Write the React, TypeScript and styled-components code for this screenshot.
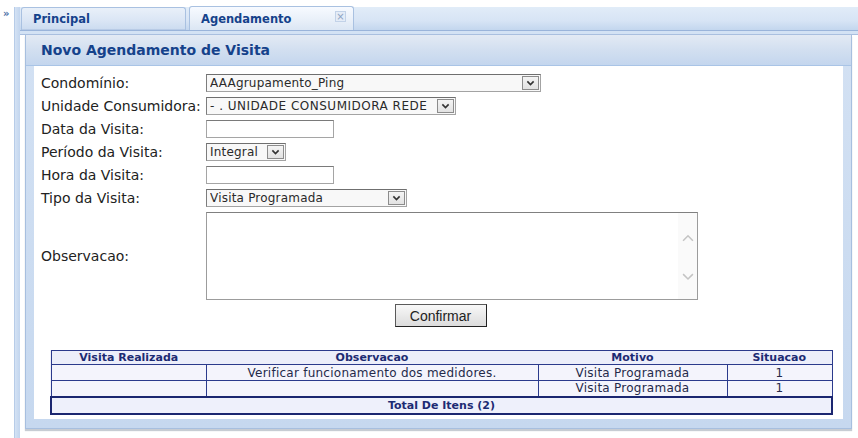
import React from 'react';
import styled, { createGlobalStyle } from 'styled-components';

const GlobalStyle = createGlobalStyle`
  html, body {
    margin: 0;
    padding: 0;
    background: #ffffff;
  }
  body {
    font-family: "DejaVu Sans", Verdana, sans-serif;
    color: #222;
  }
  * {
    box-sizing: border-box;
  }
`;

const Page = styled.div`
  display: flex;
  width: 858px;
  height: 438px;
  overflow: hidden;
  background: #fff;
`;

const Side = styled.div`
  width: 14px;
  padding: 9px 0 0 3px;
  font-size: 10px;
  font-weight: bold;
  color: #4a6fa5;
  line-height: 10px;
`;

const Rail = styled.div`
  width: 6px;
  margin-top: 7px;
  background: linear-gradient(to right, #d4e2f4, #c2d5ee);
  border-left: 1px solid #b7cce8;
`;

const Main = styled.div`
  flex: 1;
  display: flex;
  flex-direction: column;
  margin-top: 7px;
  min-width: 0;
`;

const TabStrip = styled.div`
  display: flex;
  align-items: flex-end;
  gap: 3px;
  height: 24px;
  padding-left: 1px;
  background: linear-gradient(to bottom, #e1ecf8 0%, #d7e4f5 60%, #c3d6ee 100%);
  border-bottom: 1px solid #9ab4da;
`;

const Tab = styled.div<{ $active?: boolean }>`
  position: relative;
  display: flex;
  align-items: center;
  width: 165px;
  height: ${p => (p.$active ? '24px' : '23px')};
  padding-left: 11px;
  border: 1px solid #a9c1e1;
  border-bottom: none;
  border-radius: 3px 3px 0 0;
  background: ${p =>
    p.$active
      ? 'linear-gradient(to bottom, #f7faff 0%, #e9f0f9 55%, #dbe6f4 100%)'
      : 'linear-gradient(to bottom, #e9f0f9 0%, #dbe6f5 55%, #cbdbf0 100%)'};
  box-shadow: ${p => (p.$active ? 'none' : 'inset 0 -8px 0 -7px #b8cbe6')};
  font-size: 11.5px;
  font-weight: bold;
  color: #15428b;
`;

const Close = styled.span`
  position: absolute;
  right: 7px;
  top: 4px;
  width: 11px;
  height: 11px;
  border: 1px solid #c2d2e8;
  background: #e4ecf7;
  color: #8ea3c4;
  font-size: 10px;
  font-weight: normal;
  line-height: 9px;
  text-align: center;
`;

const StripLines = styled.div`
  height: 4px;
  background: #d3e2f4;
  border-bottom: 1px solid #a9bfdf;
`;

const Panel = styled.div`
  margin: 0 6px 0 5px;
  border: 1px solid #a7bfdf;
  border-top: none;
  background: linear-gradient(to bottom, #d3e1f3, #c6d8ef);
  padding-bottom: 9px;
  box-shadow: 0 2px 1px #c7ccd3;
`;

const PanelHeader = styled.div`
  height: 31px;
  padding: 7px 0 0 15px;
  background: linear-gradient(to bottom, #e3eaf4 0%, #d2dff0 50%, #c4d6ee 100%);
  border-bottom: 1px solid #a9c4e6;
  font-size: 14px;
  font-weight: bold;
  color: #15428b;
`;

const Body = styled.div`
  margin: 0 8px 0 8px;
  background: #fff;
  padding: 8px 9px 4px 7px;
  display: flex;
  flex-direction: column;
`;

const FormGrid = styled.div`
  display: grid;
  grid-template-columns: 165px 1fr;
  row-gap: 5px;
  align-items: center;
`;

const Label = styled.label`
  font-size: 14px;
  color: #222;
  white-space: nowrap;
`;

const SelectBox = styled.div<{ $w: number }>`
  display: flex;
  align-items: center;
  width: ${p => p.$w}px;
  height: 18px;
  border: 1px solid #a3a3a3;
  border-top-color: #6f6f6f;
  border-left-color: #7d7d7d;
  background: #f8f8f8;
  padding: 0 1px 0 3px;
`;

const SelectText = styled.span<{ $spread?: boolean }>`
  flex: 1;
  min-width: 0;
  font-size: 12px;
  letter-spacing: ${p => (p.$spread ? '0.5px' : '0.2px')};
  color: #2a2a2a;
  white-space: nowrap;
  overflow: hidden;
`;

const DropButton = styled.span`
  display: flex;
  flex-shrink: 0;
  align-items: center;
  justify-content: center;
  width: 17px;
  height: 14px;
  border: 1px solid #8c8c8c;
  background: linear-gradient(to bottom, #f4f4f4, #e2e2e2);
`;

const TextInput = styled.input`
  width: 128px;
  height: 18px;
  border: 1px solid #a5a5a5;
  border-top-color: #7a7a7a;
  padding: 0 2px;
  font-family: inherit;
  font-size: 11px;
  outline: none;
`;

const AreaBox = styled.div`
  display: flex;
  width: 492px;
  height: 88px;
  border: 1px solid #9c9c9c;
  border-top-color: #808080;
  background: #fff;
`;

const Area = styled.textarea`
  flex: 1;
  border: none;
  resize: none;
  outline: none;
  font-family: inherit;
  font-size: 11px;
  overflow: hidden;
`;

const ScrollRail = styled.div`
  width: 19px;
  display: flex;
  flex-direction: column;
  justify-content: space-between;
  align-items: center;
  padding: 20px 0 17px;
  background: #fafafa;
`;

const ButtonRow = styled.div`
  display: flex;
  justify-content: center;
  margin-top: 4px;
  padding-left: 6px;
`;

const Button = styled.button`
  width: 92px;
  height: 23px;
  border: 1px solid #5a5a5a;
  border-right-color: #222;
  border-bottom-color: #222;
  background: linear-gradient(to bottom, #f8f8f8, #dcdcdc);
  font-family: "Liberation Sans", Arial, sans-serif;
  font-size: 14px;
  color: #222;
  padding: 0;
`;

const Table = styled.table`
  margin: 23px 0 0 9px;
  width: 783px;
  border-collapse: collapse;
  border: 1px solid #2b3a8c;
  background: #f0f1fb;
  font-size: 12px;
  letter-spacing: 0.25px;
`;

const Th = styled.th<{ $w?: number }>`
  height: 14px;
  padding: 0;
  width: ${p => (p.$w ? `${p.$w}px` : 'auto')};
  font-size: 11px;
  letter-spacing: 0;
  font-weight: bold;
  color: #1d2b73;
  background: #eceefa;
  border-bottom: 1px solid #2b3a8c;
  line-height: 12px;
`;

const Td = styled.td`
  height: 16px;
  padding: 0;
  text-align: center;
  color: #252a4a;
  border: 1px solid #2b3a8c;
  background: #f4f4fc;
  line-height: 14px;
`;

const TotalCell = styled.td`
  height: 17px;
  padding: 0;
  text-align: center;
  font-size: 11px;
  letter-spacing: 0;
  font-weight: bold;
  color: #1d2b73;
  border: 2px solid #1b2670;
  background: #eef0fb;
`;

const Chevron = ({ dir = 'down', color = '#333', size = 9 }: { dir?: 'up' | 'down'; color?: string; size?: number }) => (
  <svg width={size} height={size * 0.7} viewBox="0 0 10 7">
    <polyline
      points={dir === 'down' ? '1.5,1.5 5,5 8.5,1.5' : '1.5,5.5 5,2 8.5,5.5'}
      fill="none"
      stroke={color}
      strokeWidth={dir === 'down' && color === '#333' ? 1.8 : 1.1}
    />
  </svg>
);

const Select = ({ value, width, spread }: { value: string; width: number; spread?: boolean }) => (
  <SelectBox $w={width}>
    <SelectText $spread={spread}>{value}</SelectText>
    <DropButton>
      <Chevron />
    </DropButton>
  </SelectBox>
);

const rows = [
  { realizada: '', obs: 'Verificar funcionamento dos medidores.', motivo: 'Visita Programada', situacao: '1' },
  { realizada: '', obs: '', motivo: 'Visita Programada', situacao: '1' },
];

export default function App() {
  return (
    <>
      <GlobalStyle />
      <Page>
        <Side>»</Side>
        <Rail />
        <Main>
          <TabStrip>
            <Tab>Principal</Tab>
            <Tab $active>
              Agendamento
              <Close>×</Close>
            </Tab>
          </TabStrip>
          <StripLines />
          <Panel>
            <PanelHeader>Novo Agendamento de Visita</PanelHeader>
            <Body>
              <FormGrid>
                <Label>Condomínio:</Label>
                <Select value="AAAgrupamento_Ping" width={335} />
                <Label>Unidade Consumidora:</Label>
                <Select value="- . UNIDADE CONSUMIDORA REDE" width={250} spread />
                <Label>Data da Visita:</Label>
                <TextInput type="text" />
                <Label>Período da Visita:</Label>
                <Select value="Integral" width={80} />
                <Label>Hora da Visita:</Label>
                <TextInput type="text" />
                <Label>Tipo da Visita:</Label>
                <Select value="Visita Programada" width={201} />
                <Label>Observacao:</Label>
                <AreaBox>
                  <Area />
                  <ScrollRail>
                    <Chevron dir="up" color="#c4c4c4" size={14} />
                    <Chevron dir="down" color="#c4c4c4" size={14} />
                  </ScrollRail>
                </AreaBox>
              </FormGrid>
              <ButtonRow>
                <Button type="button">Confirmar</Button>
              </ButtonRow>
              <Table>
                <thead>
                  <tr>
                    <Th $w={155}>Visita Realizada</Th>
                    <Th $w={332}>Observacao</Th>
                    <Th $w={189}>Motivo</Th>
                    <Th>Situacao</Th>
                  </tr>
                </thead>
                <tbody>
                  {rows.map((r, i) => (
                    <tr key={i}>
                      <Td>{r.realizada}</Td>
                      <Td>{r.obs}</Td>
                      <Td>{r.motivo}</Td>
                      <Td>{r.situacao}</Td>
                    </tr>
                  ))}
                  <tr>
                    <TotalCell colSpan={4}>Total De Itens ({rows.length})</TotalCell>
                  </tr>
                </tbody>
              </Table>
            </Body>
          </Panel>
        </Main>
      </Page>
    </>
  );
}
